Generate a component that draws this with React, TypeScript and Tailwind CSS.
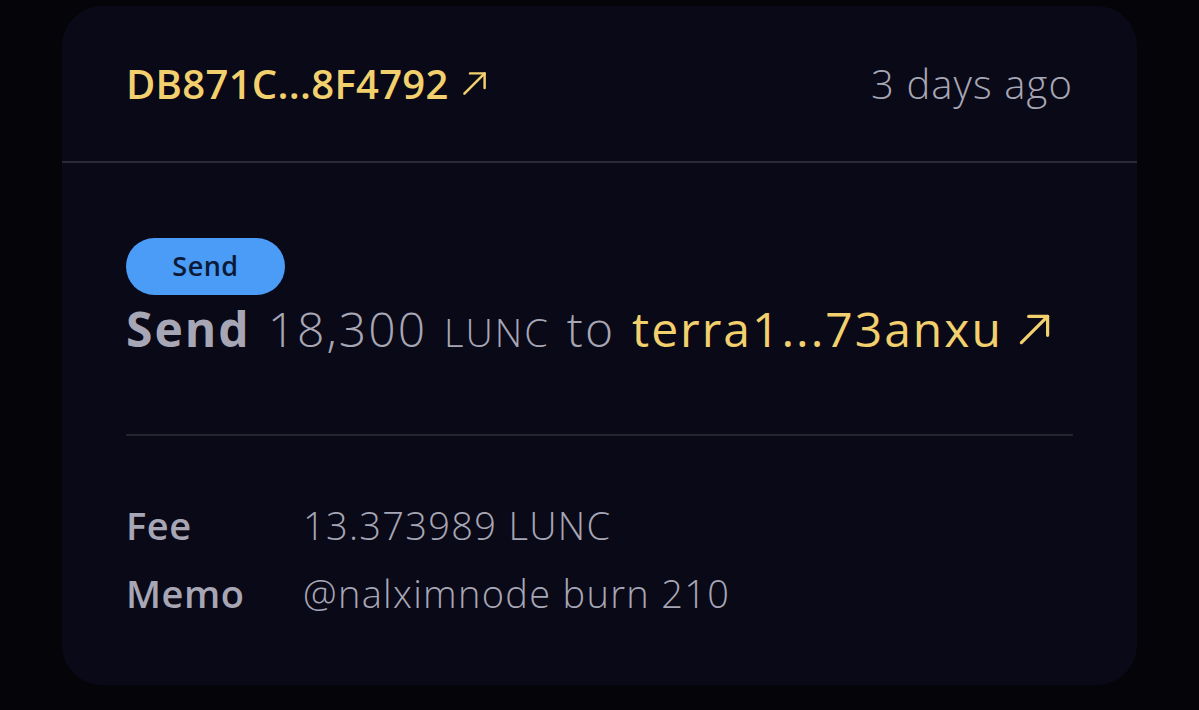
const FONT = { fontFamily: '"Open Sans", "Liberation Sans", sans-serif' };

function Arrow({ className }: { className?: string }) {
  return (
    <svg viewBox="0 0 24 24" className={className} fill="none" stroke="currentColor" strokeWidth={2.2} strokeLinecap="round" strokeLinejoin="round">
      <path d="M3 21L21 3" />
      <path d="M8 3h13v13" />
    </svg>
  );
}

export default function App() {
  return (
    <div className="h-[710px] w-full overflow-hidden bg-[#050409] pt-[6px] pl-[62px]" style={FONT}>
      <div className="h-[679px] w-[1075px] rounded-[40px] bg-[#0a0917]">
        {/* header */}
        <div className="flex h-[157px] items-center justify-between border-b-2 border-[#2a2936] px-[64px]">
          <a className="flex items-center gap-[12px] text-[40px] font-semibold tracking-[0.3px] text-[#f2d06e]">
            DB871C...8F4792
            <Arrow className="h-[27px] w-[27px]" />
          </a>
          <span className="text-[40px] font-light tracking-[1.1px] text-[#a7a6b5]">3 days ago</span>
        </div>

        {/* body */}
        <div className="px-[64px]">
          <div className="mt-[75px] inline-flex h-[57px] w-[159px] items-center justify-center rounded-full bg-[#4a9cf6] text-[27px] font-semibold tracking-[0.5px] text-[#0c1a38]">
            Send
          </div>
          <p className="mt-[6px] flex items-baseline gap-[17px] text-[48px] leading-[56px] tracking-[2px] text-[#a7a6b5]">
            <span className="font-bold">Send</span>
            <span className="font-light">18,300</span>
            <span className="text-[38px] font-light">LUNC</span>
            <span className="font-light">to</span>
            <a className="flex items-center gap-[14px] font-normal text-[#f2d06e]">
              terra1...73anxu
              <Arrow className="h-[35px] w-[35px]" />
            </a>
          </p>

          <div className="mt-[74px] h-[2px] bg-[#26252f]" />

          <dl className="mt-[69px] grid grid-cols-[177px_1fr] gap-y-[28px] text-[38px] leading-[40px] tracking-[1.3px] text-[#a7a6b5]">
            <dt className="font-semibold tracking-[0.5px]">Fee</dt>
            <dd className="font-light">13.373989 LUNC</dd>
            <dt className="font-semibold tracking-[0.5px]">Memo</dt>
            <dd className="font-light">@nalximnode burn 210</dd>
          </dl>
        </div>
      </div>
    </div>
  );
}
